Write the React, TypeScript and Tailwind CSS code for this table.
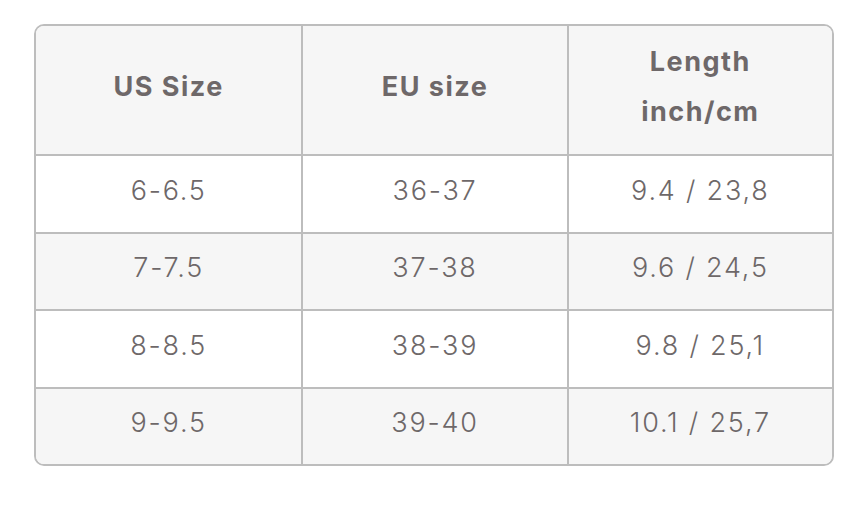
const rows = [
  { h: "h-[78px]", cells: ["6-6.5", "36-37", "9.4 / 23,8"] },
  { h: "h-[77px]", cells: ["7-7.5", "37-38", "9.6 / 24,5"] },
  { h: "h-[78px]", cells: ["8-8.5", "38-39", "9.8 / 25,1"] },
  { h: "h-[77px]", cells: ["9-9.5", "39-40", "10.1 / 25,7"] },
];

const App = () => {
  return (
    <div className="min-h-screen bg-white pt-[24px] pl-[34px]" style={{ fontFamily: "Inter, sans-serif" }}>
      <div className="w-[800px] border-2 border-[#bdbdbd] rounded-[10px] overflow-hidden text-[#6e6869]">
        <div className="grid grid-cols-3 h-[128px] bg-[#f6f6f6] font-bold text-[27px] leading-[50px] tracking-[1.5px]">
          <div className="flex items-center justify-center text-center pb-[6px]">US Size</div>
          <div className="flex items-center justify-center text-center pb-[6px] border-l-2 border-[#bdbdbd]">EU size</div>
          <div className="flex items-center justify-center text-center pb-[6px] border-l-2 border-[#bdbdbd]">
            Length
            <br />
            inch/cm
          </div>
        </div>
        {rows.map((row, i) => (
          <div
            key={i}
            className={`grid grid-cols-3 ${row.h} border-t-2 border-[#bdbdbd] text-[27px] font-light tracking-[1.8px] ${i % 2 === 1 ? "bg-[#f6f6f6]" : "bg-white"}`}
          >
            {row.cells.map((cell, j) => (
              <div
                key={j}
                className={`flex items-center justify-center pb-[6px] ${j > 0 ? "border-l-2 border-[#bdbdbd]" : ""}`}
              >
                {cell}
              </div>
            ))}
          </div>
        ))}
      </div>
    </div>
  );
};

export default App;
